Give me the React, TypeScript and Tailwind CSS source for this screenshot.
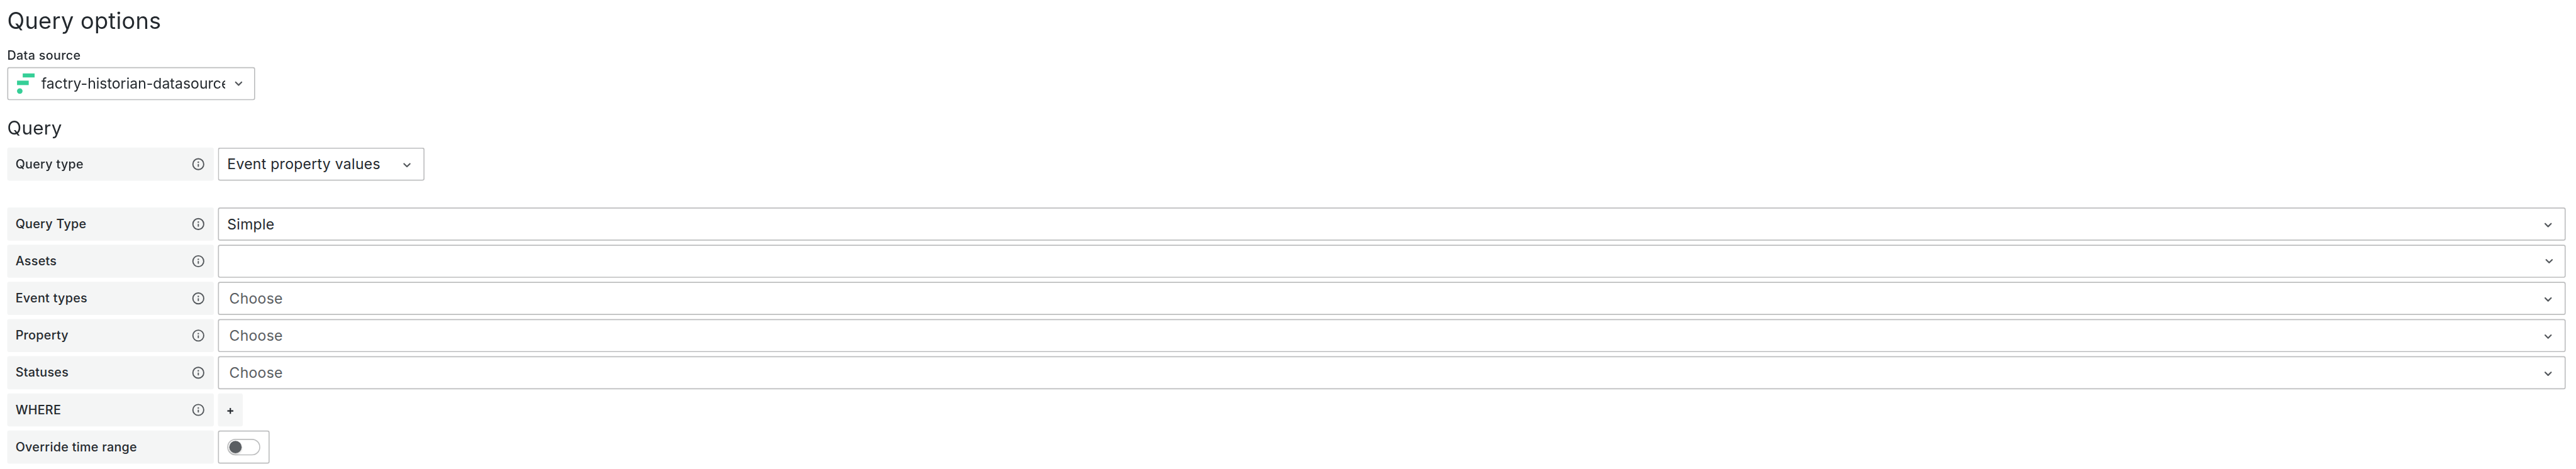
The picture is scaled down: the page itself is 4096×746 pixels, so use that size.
import type { ReactNode } from "react";

const INFO =
  "M12,2A10,10,0,1,0,22,12,10,10,0,0,0,12,2Zm0,18a8,8,0,1,1,8-8A8,8,0,0,1,12,20Zm0-8.5a1,1,0,0,0-1,1v3a1,1,0,0,0,2,0v-3A1,1,0,0,0,12,11.5Zm0-4a1.25,1.25,0,1,0,1.25,1.25A1.25,1.25,0,0,0,12,7.5Z";
const ANGLE_DOWN =
  "M17,9.17a1,1,0,0,0-1.41,0L12,12.71,8.46,9.17a1,1,0,0,0-1.41,0,1,1,0,0,0,0,1.42l4.24,4.24a1,1,0,0,0,1.42,0L17,10.59A1,1,0,0,0,17,9.17Z";

function Chevron({ className = "" }: { className?: string }) {
  return (
    <svg viewBox="0 0 24 24" className={`size-4 shrink-0 fill-[#54585c] ${className}`}>
      <path d={ANGLE_DOWN} />
    </svg>
  );
}

function Label({ text, info = true }: { text: string; info?: boolean }) {
  return (
    <div className="flex h-8 w-[200px] shrink-0 items-center justify-between rounded-[2px] bg-[#f4f5f5] px-2 text-[12px] font-medium tracking-[0.18px]">
      <span className="pb-px">{text}</span>
      {info && (
        <svg viewBox="0 0 24 24" className="size-3.5 fill-[#54585c]">
          <path d={INFO} />
        </svg>
      )}
    </div>
  );
}

function Row({ label, info, children }: { label: string; info?: boolean; children: ReactNode }) {
  return (
    <div className="flex gap-1">
      <Label text={label} info={info} />
      {children}
    </div>
  );
}

const BOX = "flex h-8 items-center rounded-[2px] border border-[#bdbebf] bg-white pl-2";

function Select({ value, placeholder, className = "grow" }: { value?: string; placeholder?: string; className?: string }) {
  const filled = value || placeholder;
  return (
    <div className={`${BOX} justify-between ${className} ${filled ? "pr-2" : "pr-[7px]"}`}>
      {placeholder ? (
        <span className="pb-px pl-0.5 text-[#5a5e62]">{placeholder}</span>
      ) : (
        <span className="pb-px">{value}</span>
      )}
      <Chevron className={filled ? "mt-0.5" : ""} />
    </div>
  );
}

export default function App() {
  return (
    <div className="h-[746px] w-[4096px] overflow-hidden bg-white">
      <div className="flex h-[454px] w-[2494px] origin-top-left scale-[1.64234] flex-col pr-2.5 pl-[7px] font-[Inter,sans-serif] text-[14px] leading-[22px] tracking-[0.17px] text-[#24292e]">
        <h2 className="mt-[7px] text-[22px] leading-[27px] tracking-[0.18px]">Query options</h2>
        <div className="mt-[11.5px] text-[12px] leading-[15px] font-medium tracking-[0.2px]">Data source</div>
        <div className={`${BOX} mt-[4.5px] w-60 pr-[7px]`}>
          <svg viewBox="0 0 18 20" className="h-5 w-[18px] shrink-0 fill-[#36cf97]">
            <rect x="6" y="0" width="11.5" height="4" />
            <rect x="0.5" y="7.1" width="11.3" height="4.3" />
            <circle cx="3.15" cy="17.2" r="2.7" />
          </svg>
          <span className="ml-1.5 w-[178px] overflow-hidden pb-px tracking-[0.01px] whitespace-nowrap">
            factry-historian-datasource
          </span>
          <Chevron className="ml-auto" />
        </div>
        <h3 className="mt-4 text-[18px] leading-[22px] tracking-[0.2px]">Query</h3>
        <div className="mt-2">
          <Row label="Query type">
            <Select value="Event property values" className="w-[200px]" />
          </Row>
        </div>
        <div className="mt-[26px] flex flex-col gap-1">
          <Row label="Query Type">
            <Select value="Simple" />
          </Row>
          <Row label="Assets">
            <Select />
          </Row>
          <Row label="Event types">
            <Select placeholder="Choose" />
          </Row>
          <Row label="Property">
            <Select placeholder="Choose" />
          </Row>
          <Row label="Statuses">
            <Select placeholder="Choose" />
          </Row>
          <Row label="WHERE">
            <button className="flex h-8 w-6 items-center justify-center rounded-[2px] bg-[#f4f5f5]">
              <svg viewBox="0 0 6 6" className="mt-px size-1.5 fill-[#24292e]">
                <path d="M2.35 0h1.3v2.35H6v1.3H3.65V6h-1.3V3.65H0v-1.3h2.35z" />
              </svg>
            </button>
          </Row>
          <Row label="Override time range" info={false}>
            <div className={`${BOX} w-[50px]`}>
              <div className="flex h-4 w-8 items-center rounded-full border border-[#bdbebf] pl-px">
                <div className="size-3 rounded-full bg-[#5a5e62] shadow-[0_1px_2px_rgba(24,26,27,0.2)]" />
              </div>
            </div>
          </Row>
        </div>
      </div>
    </div>
  );
}
